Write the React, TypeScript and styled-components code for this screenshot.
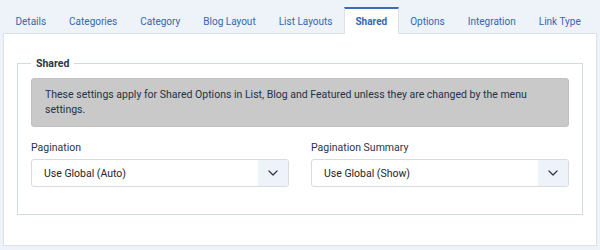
import React from 'react'
import styled, { createGlobalStyle } from 'styled-components'

const GlobalStyle = createGlobalStyle`
    html, body {
        margin: 0;
        padding: 0;
        background: #eef2f9;
        font-family: Roboto, "Liberation Sans", sans-serif;
        font-size: 10.5px;
        color: #243246;
    }
`

const tabs = ['Details', 'Categories', 'Category', 'Blog Layout', 'List Layouts', 'Shared', 'Options', 'Integration', 'Link Type']

// Ein Auswahlfeld mit Label und Pfeil
const SelectField: React.FC<{ label: string, value: string }> = ({ label, value }) => {
    return (
        <Field>
            <Label>{label}</Label>
            <SelectBox>
                <SelectValue>{value}</SelectValue>
                <Caret>
                    <svg width="10" height="6" viewBox="0 0 10 6" fill="none">
                        <path d="M1 1l4 4 4-4" stroke="#2b3648" strokeWidth="1.2" strokeLinecap="round" strokeLinejoin="round" />
                    </svg>
                </Caret>
            </SelectBox>
        </Field>
    )
}

const App: React.FC = () => {
    return (
        <Page>
            <GlobalStyle />
            <TabList>
                {tabs.map((t) => (
                    <Tab key={t} active={t === 'Shared'}>{t}</Tab>
                ))}
            </TabList>
            <Panel>
                <Fieldset>
                    <Legend>Shared</Legend>
                    <Alert>
                        These settings apply for Shared Options in List, Blog and Featured unless they are changed by the menu settings.
                    </Alert>
                    <FieldRow>
                        <SelectField label="Pagination" value="Use Global (Auto)" />
                        <SelectField label="Pagination Summary" value="Use Global (Show)" />
                    </FieldRow>
                </Fieldset>
            </Panel>
        </Page>
    )
}

export default App

const Page = styled.div`
    padding: 7px 3px 4px 3px;
`

const TabList = styled.div`
    display: flex;
    padding-left: 1px;
    position: relative;
    z-index: 1;
`

const Tab = styled.div<{ active?: boolean }>`
    flex-shrink: 0;
    white-space: nowrap;
    height: 27px;
    box-sizing: border-box;
    padding: 0 10.5px 1px 10.5px;
    display: flex;
    align-items: center;
    font-size: 10px;
    color: #3567b2;
    font-weight: ${(p) => (p.active ? 700 : 400)};
    background: ${(p) => (p.active ? '#fff' : 'transparent')};
    border-top: 2px solid ${(p) => (p.active ? '#3c6cb4' : 'transparent')};
    border-left: 1px solid ${(p) => (p.active ? '#dce1e8' : 'transparent')};
    border-right: 1px solid ${(p) => (p.active ? '#dce1e8' : 'transparent')};
    margin-bottom: -1px;
`

const Panel = styled.div`
    background: #fff;
    border: 1px solid #dce1e8;
    padding: 23px 13px 30px 13px;
`

const Fieldset = styled.fieldset`
    margin: 0;
    border: 1px solid #d3d9e1;
    padding: 8px 13px 27px 13px;
`

const Legend = styled.legend`
    padding: 0 5px;
    font-weight: 700;
    font-size: 10.5px;
    color: #2b3648;
`

const Alert = styled.div`
    background: #c9c9c9;
    border: 1px solid #c1c1c1;
    border-radius: 3px;
    padding: 8px 13px 9px 13px;
    line-height: 15px;
    color: #243246;
`

const FieldRow = styled.div`
    display: grid;
    grid-template-columns: 1fr 1fr;
    gap: 22px;
    margin-top: 13px;
`

const Field = styled.div`
    display: flex;
    flex-direction: column;
    gap: 4px;
`

const Label = styled.label`
    line-height: 15px;
    color: #2b3648;
`

const SelectBox = styled.div`
    display: flex;
    height: 28px;
    box-sizing: border-box;
    border: 1px solid #d6dbe2;
    border-radius: 3px;
    overflow: hidden;
    background: #fff;
`

const SelectValue = styled.div`
    flex: 1;
    display: flex;
    align-items: center;
    padding-left: 12px;
    color: #22262a;
`

const Caret = styled.div`
    width: 30px;
    display: flex;
    align-items: center;
    justify-content: center;
    background: #eef2f9;
`
